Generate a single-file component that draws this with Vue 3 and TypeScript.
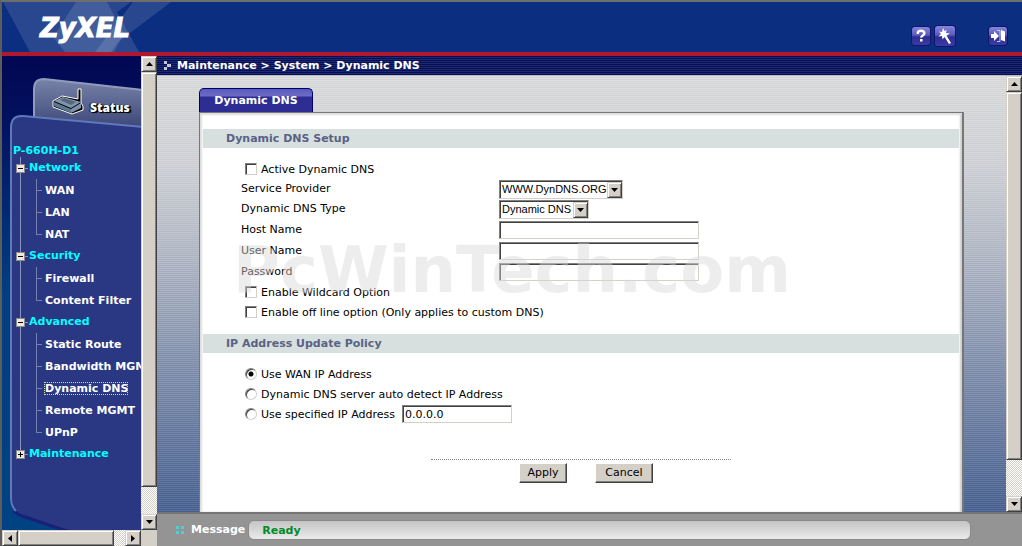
<script setup lang="ts">
import { reactive, ref } from 'vue'

interface Category {
  name: string
  open: boolean
  items: string[]
}

const categories = reactive<Category[]>([
  { name: 'Network', open: true, items: ['WAN', 'LAN', 'NAT'] },
  { name: 'Security', open: true, items: ['Firewall', 'Content Filter'] },
  {
    name: 'Advanced',
    open: true,
    items: ['Static Route', 'Bandwidth MGMT', 'Dynamic DNS', 'Remote MGMT', 'UPnP'],
  },
  { name: 'Maintenance', open: false, items: [] },
])

const current = ref('Dynamic DNS')
const active = ref(false)
const wildcard = ref(false)
const offline = ref(false)
const provider = ref('WWW.DynDNS.ORG')
const dnsType = ref('Dynamic DNS')
const host = ref('')
const user = ref('')
const password = ref('')
const policy = ref('wan')
const ip = ref('0.0.0.0')
</script>

<template>
  <div class="page">
    <header class="banner">
      <svg class="banner-art" width="180" height="50" viewBox="0 0 180 50" aria-hidden="true">
        <path d="M1 0H129L115 10L137 50H28Z" fill="#fff" opacity=".12" />
        <path d="M131 0H169L116 40L109 50H93Z" fill="#fff" opacity=".12" />
        <path d="M74 0H105L122 32L112 50H63L51 35Z" fill="#fff" opacity=".12" />
      </svg>
      <h1 class="logo">ZyXEL</h1>
      <div class="tools">
        <button class="tool" type="button" aria-label="Help">
          <svg width="18" height="18" viewBox="0 0 18 18">
            <path d="M5.8 7V6q0-2.200 3.300-2.200T12.400 6.300q0 1.300-1.600 2.200T9.300 10.700" fill="none" stroke="#fff" stroke-width="2.400" />
            <rect x="8" y="12" width="2.500" height="2.500" fill="#fff" />
          </svg>
        </button>
        <button class="tool wizard" type="button" aria-label="Wizard">
          <svg width="20" height="20" viewBox="0 0 20 20">
            <path d="M8 2l1.500 3 2-1-.5 3 4 .5-3.500 2 4.500 7.500-2 1L9.500 11l-2 2.500L7 10l-3.500.500L6 8 4 5.500 7 6z" fill="#fff" />
          </svg>
        </button>
        <button class="tool logout" type="button" aria-label="Logout">
          <svg width="18" height="18" viewBox="0 0 18 18">
            <path d="M2 7h3V4l5 5-5 5v-3H2z" fill="#fff" />
            <path d="M8 3.500h3v11H8" fill="none" stroke="#c8c8f4" />
            <path d="M12 3l4 1.500v10L12 13z" fill="#fff" />
          </svg>
        </button>
      </div>
    </header>

    <div class="body">
      <aside class="sidebar">
        <div class="side-view">
          <svg class="side-art" viewBox="0 0 139 474" preserveAspectRatio="none" aria-hidden="true">
            <defs>
              <linearGradient id="side-back" x1="0" y1="0" x2="0" y2="1">
                <stop offset="0" stop-color="#020752" />
                <stop offset=".12" stop-color="#02105e" />
                <stop offset=".5" stop-color="#003f80" />
                <stop offset="1" stop-color="#004282" />
              </linearGradient>
              <linearGradient id="side-tab" x1="0" y1="0" x2="0" y2="1">
                <stop offset="0" stop-color="#7883a9" />
                <stop offset="1" stop-color="#3c4778" />
              </linearGradient>
            </defs>
            <rect width="139" height="474" fill="url(#side-back)" />
            <path d="M32 64V33Q32 23 42 23L141 34V72H32Z" fill="url(#side-tab)" stroke="#929bba" stroke-width="2" />
            <path d="M9 72Q9 59 21 60L142 71V477H74L20 458Q9 454 9 442Z" fill="#2a3884" />
            <path d="M12 455Q15 458 20 460L68 476" fill="none" stroke="#1c1f78" stroke-width="3" />
            <path d="M14 455Q9 450 9 442V72Q9 59 21 60L142 71" fill="none" stroke="#6078bc" stroke-width="2" />
          </svg>

          <nav class="nav">
            <a class="status" href="#status">
              <svg width="34" height="28" viewBox="0 0 34 28" aria-hidden="true">
                <path d="M26 12V2h3v14l2 3v4L20 27 1 20v-6l9-5z" fill="#000" stroke="#fff" stroke-width="1" />
                <path d="M2 14l9-4 18 5-10 6z" fill="#8095ac" />
                <path d="M2 15l17 7v4L2 19z" fill="#5a7890" />
                <path d="M19 22l10-6v5l-10 5z" fill="#7b92a8" />
                <path d="M8 13l4-2 12 4-5 3z" fill="#52687f" />
              </svg>
              <span>Status</span>
            </a>
            <p class="model">P-660H-D1</p>
            <ul class="tree">
              <li v-for="cat in categories" :key="cat.name" class="category">
                <div class="cat-row">
                  <button
                    class="toggle"
                    type="button"
                    :aria-label="cat.name"
                    :aria-expanded="cat.open"
                    @click="cat.open = !cat.open"
                  >
                    <svg width="9" height="9" viewBox="0 0 9 9">
                      <rect x=".5" y=".5" width="8" height="8" fill="#ece9e4" stroke="#8f8b86" />
                      <path d="M2 4.500h5" stroke="#000" />
                      <path v-if="!cat.open" d="M4.500 2v5" stroke="#000" />
                    </svg>
                  </button>
                  <a class="cat-link" href="#menu" @click.prevent="cat.open = !cat.open">{{ cat.name }}</a>
                </div>
                <ul v-if="cat.open" class="items">
                  <li v-for="item in cat.items" :key="item">
                    <a
                      href="#page"
                      :class="{ current: item === current }"
                      @click.prevent="current = item"
                    >{{ item }}</a>
                  </li>
                </ul>
              </li>
            </ul>
          </nav>
        </div>

        <div class="scroll vertical">
          <button class="arrow" type="button" aria-label="Scroll menu up">
            <svg width="7" height="4" viewBox="0 0 7 4"><path d="M0 4h7L3.500 0z" /></svg>
          </button>
          <div class="track"><div class="thumb side-thumb"></div></div>
          <button class="arrow" type="button" aria-label="Scroll menu down">
            <svg width="7" height="4" viewBox="0 0 7 4"><path d="M0 0h7L3.500 4z" /></svg>
          </button>
        </div>

        <div class="scroll horizontal">
          <button class="arrow" type="button" aria-label="Scroll menu left">
            <svg width="4" height="7" viewBox="0 0 4 7"><path d="M4 0v7L0 3.500z" /></svg>
          </button>
          <div class="track"><div class="thumb across-thumb"></div></div>
          <button class="arrow" type="button" aria-label="Scroll menu right">
            <svg width="4" height="7" viewBox="0 0 4 7"><path d="M0 0v7l4-3.500z" /></svg>
          </button>
        </div>
        <div class="corner"></div>
      </aside>

      <div class="content">
        <div class="crumbs">
          <svg width="8" height="9" viewBox="0 0 8 9" aria-hidden="true">
            <path d="M1 0h3v3H1zM4 3h4v3H4zM1 6h3v3H1z" fill="#c4c6d6" />
          </svg>
          <span>Maintenance &gt; System &gt; Dynamic DNS</span>
        </div>

        <div class="workspace">
          <main class="main">
            <button class="tab" type="button">Dynamic DNS</button>
            <form class="panel" @submit.prevent>
              <h2>Dynamic DNS Setup</h2>
              <div class="rows">
                <div class="row choice">
                  <input id="active" v-model="active" type="checkbox" />
                  <label for="active">Active Dynamic DNS</label>
                </div>
                <div class="row">
                  <label for="provider">Service Provider</label>
                  <span class="select">
                    <select id="provider" v-model="provider"><option>WWW.DynDNS.ORG</option></select>
                    <span class="drop"><svg width="7" height="4" viewBox="0 0 7 4"><path d="M0 0h7L3.500 4z" /></svg></span>
                  </span>
                </div>
                <div class="row">
                  <label for="type">Dynamic DNS Type</label>
                  <span class="select short">
                    <select id="type" v-model="dnsType"><option>Dynamic DNS</option></select>
                    <span class="drop"><svg width="7" height="4" viewBox="0 0 7 4"><path d="M0 0h7L3.500 4z" /></svg></span>
                  </span>
                </div>
                <div class="row tall">
                  <label for="host">Host Name</label>
                  <input id="host" v-model="host" class="field" type="text" />
                </div>
                <div class="row tall">
                  <label for="user">User Name</label>
                  <input id="user" v-model="user" class="field" type="text" />
                </div>
                <div class="row tall">
                  <label for="password">Password</label>
                  <input id="password" v-model="password" class="field" type="password" />
                </div>
                <div class="row choice">
                  <input id="wildcard" v-model="wildcard" type="checkbox" />
                  <label for="wildcard">Enable Wildcard Option</label>
                </div>
                <div class="row choice">
                  <input id="offline" v-model="offline" type="checkbox" />
                  <label for="offline">Enable off line option (Only applies to custom DNS)</label>
                </div>
              </div>

              <h2>IP Address Update Policy</h2>
              <div class="rows">
                <div class="row choice">
                  <input id="wan" v-model="policy" type="radio" name="policy" value="wan" />
                  <label for="wan">Use WAN IP Address</label>
                </div>
                <div class="row choice">
                  <input id="auto" v-model="policy" type="radio" name="policy" value="auto" />
                  <label for="auto">Dynamic DNS server auto detect IP Address</label>
                </div>
                <div class="row choice">
                  <input id="fixed" v-model="policy" type="radio" name="policy" value="fixed" />
                  <label for="fixed">Use specified IP Address</label>
                  <input v-model="ip" class="field address" type="text" aria-label="IP Address" />
                </div>
              </div>

              <div class="actions">
                <button class="push" type="submit">Apply</button>
                <button class="push" type="reset">Cancel</button>
              </div>
            </form>
          </main>

          <div class="scroll vertical">
            <button class="arrow" type="button" aria-label="Scroll page up">
              <svg width="7" height="4" viewBox="0 0 7 4"><path d="M0 4h7L3.500 0z" /></svg>
            </button>
            <div class="track"><div class="thumb page-thumb"></div></div>
            <button class="arrow" type="button" aria-label="Scroll page down">
              <svg width="7" height="4" viewBox="0 0 7 4"><path d="M0 0h7L3.500 4z" /></svg>
            </button>
          </div>
        </div>

        <footer class="message">
          <svg width="8" height="8" viewBox="0 0 8 8" aria-hidden="true">
            <path d="M0 0h3v3H0zM5 0h3v3H5zM0 5h3v3H0zM5 5h3v3H5z" fill="#4fd0d0" />
          </svg>
          <span>Message</span>
          <output>Ready</output>
        </footer>
      </div>
    </div>

    <div class="watermark">PcWinTech.com</div>
  </div>
</template>

<style>
html,
body {
  margin: 0;
  background: #949494;
}
</style>

<style scoped>
* {
  box-sizing: border-box;
}

.page {
  position: relative;
  display: flex;
  flex-direction: column;
  min-height: 100vh;
  border-top: 2px solid #6e6e6e;
  border-left: 2px solid #5c5c5c;
  font: 11px/14px "DejaVu Sans", Verdana, sans-serif;
  color: #000;
}

h1,
h2,
p,
ul {
  margin: 0;
  padding: 0;
  list-style: none;
}

button,
input,
select {
  margin: 0;
  font: inherit;
  color: inherit;
}

svg {
  display: block;
}

a {
  color: inherit;
  text-decoration: none;
}

/* banner */
.banner {
  position: relative;
  display: flex;
  justify-content: space-between;
  height: 54px;
  padding: 0 15px 0 38px;
  background: #0b2e80;
  border-bottom: 4px solid #b0182f;
}

.banner-art {
  position: absolute;
  top: 0;
  left: 0;
}

.logo {
  position: relative;
  font: italic bold 26px/52px "DejaVu Sans", Verdana, sans-serif;
  color: #fff;
  -webkit-text-stroke: 1px #fff;
}

.tools {
  display: flex;
  align-items: center;
  padding-top: 18px;
}

.tool {
  display: grid;
  place-items: center;
  width: 18px;
  height: 18px;
  padding: 0;
  border: 0;
  border-radius: 3px;
  background: linear-gradient(#8585dc, #5a5abc 45%, #2c2c92 55%, #3c3ca8);
  box-shadow: 0 0 0 1px #14146a;
}

.wizard {
  width: 20px;
  height: 20px;
  margin-left: 5px;
}

.logout {
  margin-left: 34px;
}

/* layout */
.body {
  flex: 1;
  display: grid;
  grid-template-columns: 155px minmax(0, 1fr);
}

.sidebar {
  display: grid;
  grid-template-columns: minmax(0, 1fr) 16px;
  grid-template-rows: minmax(0, 1fr) 16px;
}

.side-view {
  position: relative;
  overflow: hidden;
}

.side-art {
  position: absolute;
  width: 100%;
  height: 100%;
}

.nav {
  position: relative;
  padding: 30px 0 0 11px;
  font-weight: bold;
  color: #fff;
  white-space: nowrap;
}

.status {
  display: flex;
  align-items: flex-end;
  gap: 4px;
  height: 29px;
  margin: 0 0 29px 39px;
  font: 800 12px/14px "Open Sans", sans-serif;
  text-shadow: 1px 1px #000, 2px 1px 1px #000, -1px 0 1px #000;
}

.model {
  height: 13px;
  color: #0ff;
}

.tree {
  padding-left: 3px;
}

.category {
  background: linear-gradient(#8a93bd, #8a93bd) 4px 0 / 1px 100% no-repeat;
}

.category:last-child {
  background-size: 1px 11px;
}

.cat-row {
  display: flex;
  align-items: center;
  height: 22px;
  color: #0ff;
}

.toggle {
  display: block;
  height: 9px;
  padding: 0;
  border: 0;
  background: none;
  line-height: 0;
}

.cat-link {
  padding-left: 4px;
  background: linear-gradient(#8a93bd, #8a93bd) 0 50% / 3px 1px no-repeat;
}

.items {
  margin-left: 20px;
}

.items li {
  display: flex;
  align-items: center;
  height: 22px;
  padding-left: 8px;
  background:
    linear-gradient(#7580b0, #7580b0) 0 0 / 1px 100% no-repeat,
    linear-gradient(#7580b0, #7580b0) 0 50% / 6px 1px no-repeat;
}

.items li:last-child {
  background-size: 1px 11px, 6px 1px;
}

.items a {
  padding-left: 1px;
  line-height: 13px;
}

.items .current {
  outline: 1px dotted #e0d890;
  outline-offset: -1px;
}

/* scroll bars */
.scroll {
  display: flex;
  background: #d4d0c8;
}

.vertical {
  flex-direction: column;
  width: 16px;
}

.arrow,
.thumb {
  flex: none;
  background: #d4d0c8;
  border: 1px solid;
  border-color: #d4d0c8 #404040 #404040 #d4d0c8;
  box-shadow: inset 1px 1px #fff, inset -1px -1px #808080;
}

.arrow {
  display: grid;
  place-items: center;
  width: 16px;
  height: 16px;
  padding: 0;
}

.track {
  flex: 1;
  background: repeating-conic-gradient(#d4d0c8 0 25%, #fff 0 50%) 0 0 / 2px 2px;
}

.side-thumb {
  height: 94%;
}

.page-thumb {
  height: 91%;
}

.across-thumb {
  width: 90%;
  height: 100%;
}

.corner {
  background: #d4d0c8;
}

/* content */
.content {
  display: flex;
  flex-direction: column;
}

.crumbs {
  display: flex;
  align-items: center;
  gap: 6px;
  height: 20px;
  padding-left: 6px;
  border-bottom: 1px solid #b8b8c0;
  background: repeating-linear-gradient(#060e54 0 1px, #1c2a72 1px 2px);
  font-weight: bold;
  color: #fff;
}

.workspace {
  flex: 1;
  display: flex;
  background:
    repeating-linear-gradient(rgba(255, 255, 255, 0.08) 0 1px, rgba(0, 0, 30, 0.04) 1px 2px),
    linear-gradient(#dcdddd, #d2d4d8 20%, #b2b9c6 42%, #8291ae 67%, #486292);
}

.main {
  flex: 1;
  display: flex;
  flex-direction: column;
  align-items: flex-start;
  padding: 12px 42px 0;
}

.tab {
  width: 114px;
  height: 24px;
  padding: 0;
  border: 1px solid #00006c;
  border-bottom: 0;
  border-radius: 5px 5px 0 0;
  background: linear-gradient(#5a5abc, #6c6cc6 7px, #2d2d94 8px);
  font-weight: bold;
  color: #fff;
}

.panel {
  flex: 1;
  align-self: stretch;
  padding: 16px 3px 0;
  border: solid #777;
  border-width: 1px 2px 0 1px;
  background: #fff;
  box-shadow: inset 2px 2px 2px #ddd, inset -2px 0 2px #ccc;
}

h2 {
  padding-left: 23px;
  background: #d7e0df;
  font-size: 11px;
  line-height: 19px;
  color: #596285;
}

.rows {
  padding: 11px 0 12px 38px;
}

.row {
  display: grid;
  grid-template-columns: 258px minmax(0, 1fr);
  align-items: center;
  height: 20px;
}

.tall {
  height: 21px;
}

.choice {
  display: flex;
  gap: 4px;
  padding-left: 4px;
}

.choice label {
  padding-top: 2px;
}

.field {
  width: 200px;
  height: 18px;
  padding: 0 2px;
  border: 1px solid;
  border-color: #808080 #d4d0c8 #d4d0c8 #808080;
  border-radius: 0;
  background: #fff;
  box-shadow: inset 1px 1px #404040;
  outline: 0;
}

.address {
  width: 110px;
  margin-left: 3px;
}

input[type="checkbox"],
input[type="radio"] {
  appearance: none;
  flex: none;
  width: 12px;
  height: 12px;
  border: 1px solid;
  border-color: #808080 #d4d0c8 #d4d0c8 #808080;
  background: #fff;
  box-shadow: inset 1px 1px #404040;
}

input[type="radio"] {
  border-radius: 50%;
}

input[type="checkbox"]:checked {
  background: linear-gradient(#000, #000) center / 6px 6px no-repeat #fff;
}

input[type="radio"]:checked {
  background: radial-gradient(circle, #000 2px, #fff 3px);
}

.select {
  display: grid;
  width: 124px;
  height: 19px;
  border: 1px solid;
  border-color: #808080 #d4d0c8 #d4d0c8 #808080;
  background: #fff;
  box-shadow: inset 1px 1px #404040;
}

.short {
  width: 90px;
}

.select select {
  grid-area: 1 / 1;
  appearance: none;
  width: 100%;
  padding: 0 0 0 2px;
  border: 0;
  background: none;
  outline: 0;
  font: 11px/16px "Liberation Sans", Arial, sans-serif;
}

.drop {
  grid-area: 1 / 1;
  justify-self: end;
  display: grid;
  place-items: center;
  width: 15px;
  margin-top: 1px;
  border: 1px solid;
  border-color: #d4d0c8 #404040 #404040 #d4d0c8;
  background: #d4d0c8;
  box-shadow: inset 1px 1px #fff, inset -1px -1px #808080;
  pointer-events: none;
}

.actions {
  display: flex;
  justify-content: center;
  gap: 28px;
  width: 300px;
  margin: 23px auto 28px;
  padding: 3px 0 0 10px;
  border-top: 1px dotted #888;
}

.push {
  min-width: 48px;
  height: 20px;
  padding: 0 7px;
  border: 1px solid;
  border-color: #fff #404040 #404040 #fff;
  background: #d4d0c8;
  box-shadow: inset -1px -1px #808080;
}

.push + .push {
  min-width: 58px;
}

/* message bar */
.message {
  display: flex;
  align-items: center;
  gap: 7px;
  height: 34px;
  padding: 0 51px 0 19px;
  border-top: 2px solid #747474;
  background: #949494;
  font-weight: bold;
  color: #fff;
}

.message output {
  flex: 1;
  height: 20px;
  margin-left: -4px;
  padding-left: 13px;
  border: 1px solid #8a8888;
  border-radius: 6px;
  background: linear-gradient(#c4c4c4, #eaeaea);
  line-height: 20px;
  color: #008a2a;
}

/* site mark laid over the page */
.watermark {
  position: absolute;
  inset: 0;
  display: grid;
  place-items: center;
  padding-bottom: 8px;
  font: bold 64px/1 "DejaVu Sans", Verdana, sans-serif;
  color: rgba(216, 216, 216, 0.45);
  pointer-events: none;
}
</style>
